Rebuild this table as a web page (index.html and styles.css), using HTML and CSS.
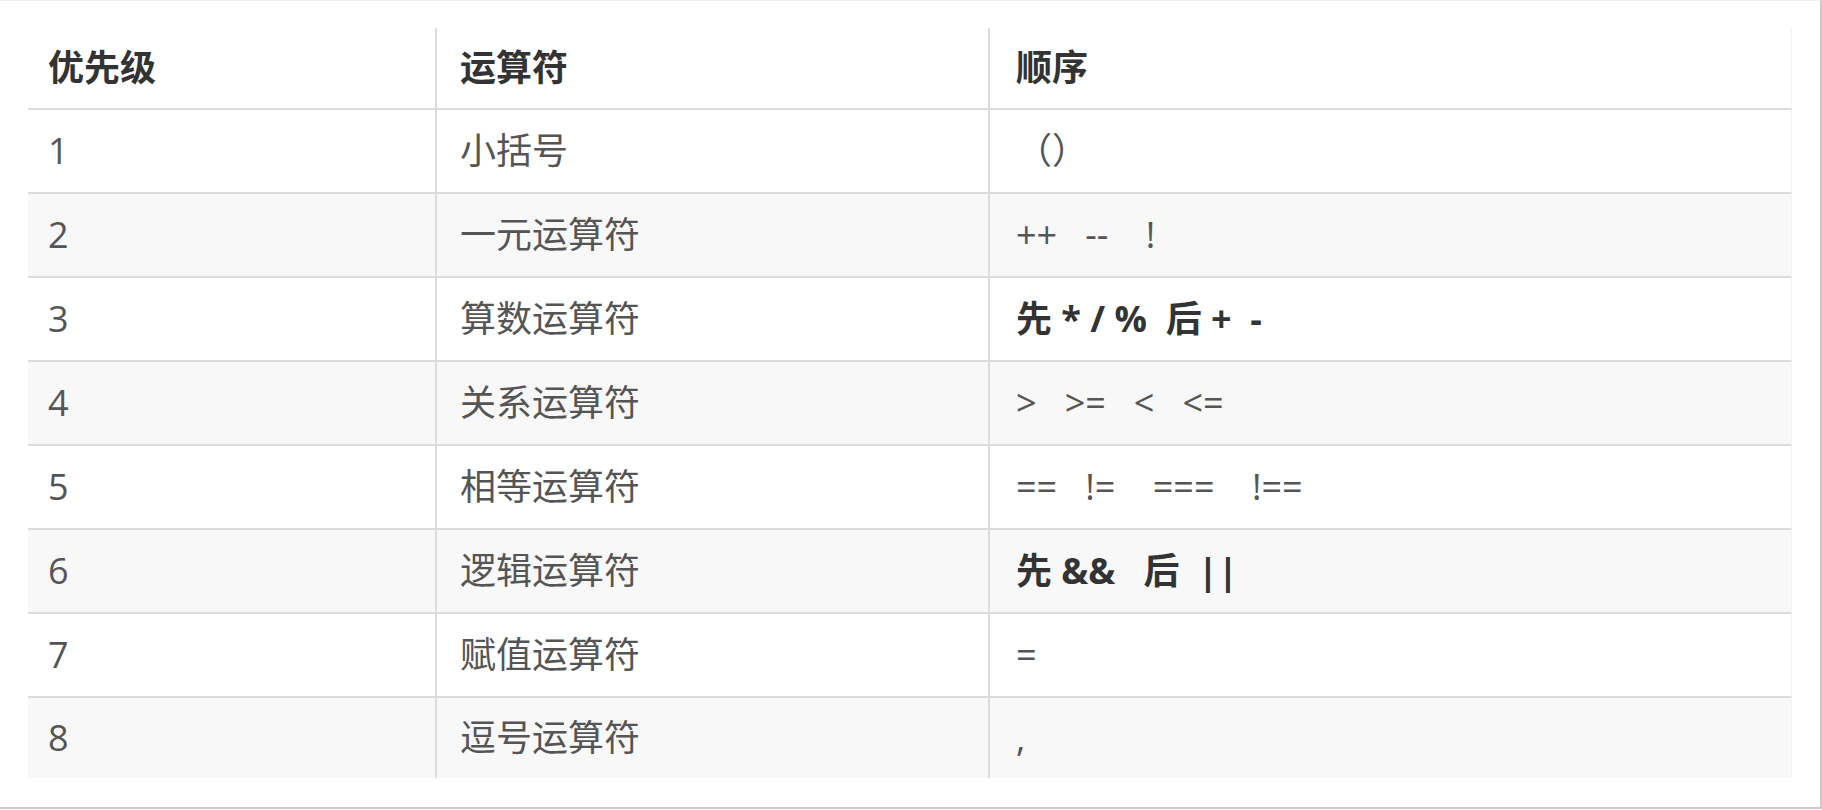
FILE: index.html
```html
<!DOCTYPE html>
<html lang="zh-CN">
<head>
<meta charset="utf-8">
<title>运算符优先级</title>
<link rel="stylesheet" href="styles.css">
</head>
<body>
<div class="frame">
  <table class="prec">
    <colgroup>
      <col class="c1">
      <col class="c2">
      <col class="c3">
    </colgroup>
    <thead>
      <tr><th class="k1">优先级</th><th class="k2">运算符</th><th class="k3">顺序</th></tr>
    </thead>
    <tbody>
      <tr><td class="k1">1</td><td class="k2">小括号</td><td class="k3 ops">（）</td></tr>
      <tr><td class="k1">2</td><td class="k2">一元运算符</td><td class="k3 ops">++   --    !</td></tr>
      <tr><td class="k1">3</td><td class="k2">算数运算符</td><td class="k3 ops strong">先 * / %  后 +  -</td></tr>
      <tr><td class="k1">4</td><td class="k2">关系运算符</td><td class="k3 ops">&gt;   &gt;=   &lt;   &lt;=</td></tr>
      <tr><td class="k1">5</td><td class="k2">相等运算符</td><td class="k3 ops">==   !=    ===    !==</td></tr>
      <tr><td class="k1">6</td><td class="k2">逻辑运算符</td><td class="k3 ops strong">先 &amp;&amp;   后  ||</td></tr>
      <tr><td class="k1">7</td><td class="k2">赋值运算符</td><td class="k3 ops">=</td></tr>
      <tr class="last"><td class="k1">8</td><td class="k2">逗号运算符</td><td class="k3 ops">,</td></tr>
    </tbody>
  </table>
</div>
</body>
</html>
```
FILE: styles.css
```css
html, body {
  margin: 0;
  padding: 0;
  background: #ffffff;
}

.frame {
  box-sizing: border-box;
  width: 1822px;
  height: 809px;
  border-top: 1px solid #efefef;
  border-right: 2px solid #c9c9c9;
  border-bottom: 2px solid #c9c9c9;
  padding: 27px 0 0 28px;
  overflow: hidden;
}

.prec {
  width: 1764px;
  table-layout: fixed;
  border-collapse: separate;
  border-spacing: 0;
  font-family: "Open Sans", "Noto Sans CJK SC", sans-serif;
  font-size: 36px;
  color: #555555;
}

.c1 { width: 407px; }
.c2 { width: 553px; }
.c3 { width: 804px; }

.prec th,
.prec td {
  box-sizing: border-box;
  padding: 0;
  text-align: left;
  vertical-align: middle;
  border-bottom: 2px solid #dcdcdc;
  white-space: nowrap;
}

.prec th {
  height: 82px;
  line-height: 80px;
  font-weight: 700;
  color: #333333;
  background: #ffffff;
}

.prec td {
  height: 84px;
  line-height: 82px;
}

.prec .k1 { padding-left: 20px; }
.prec .k2 { padding-left: 23px; border-left: 2px solid #dcdcdc; }
.prec .k3 { padding-left: 26px; border-left: 2px solid #dcdcdc; border-right: 1px solid #f3f3f3; }

.prec tbody tr:nth-child(2n) td {
  background: #f8f8f8;
}

.prec .ops {
  white-space: pre;
}

.prec .strong {
  font-weight: 700;
  color: #333333;
}

.prec tr.last td {
  border-bottom: none;
  height: 80px;
  line-height: 80px;
}
```
